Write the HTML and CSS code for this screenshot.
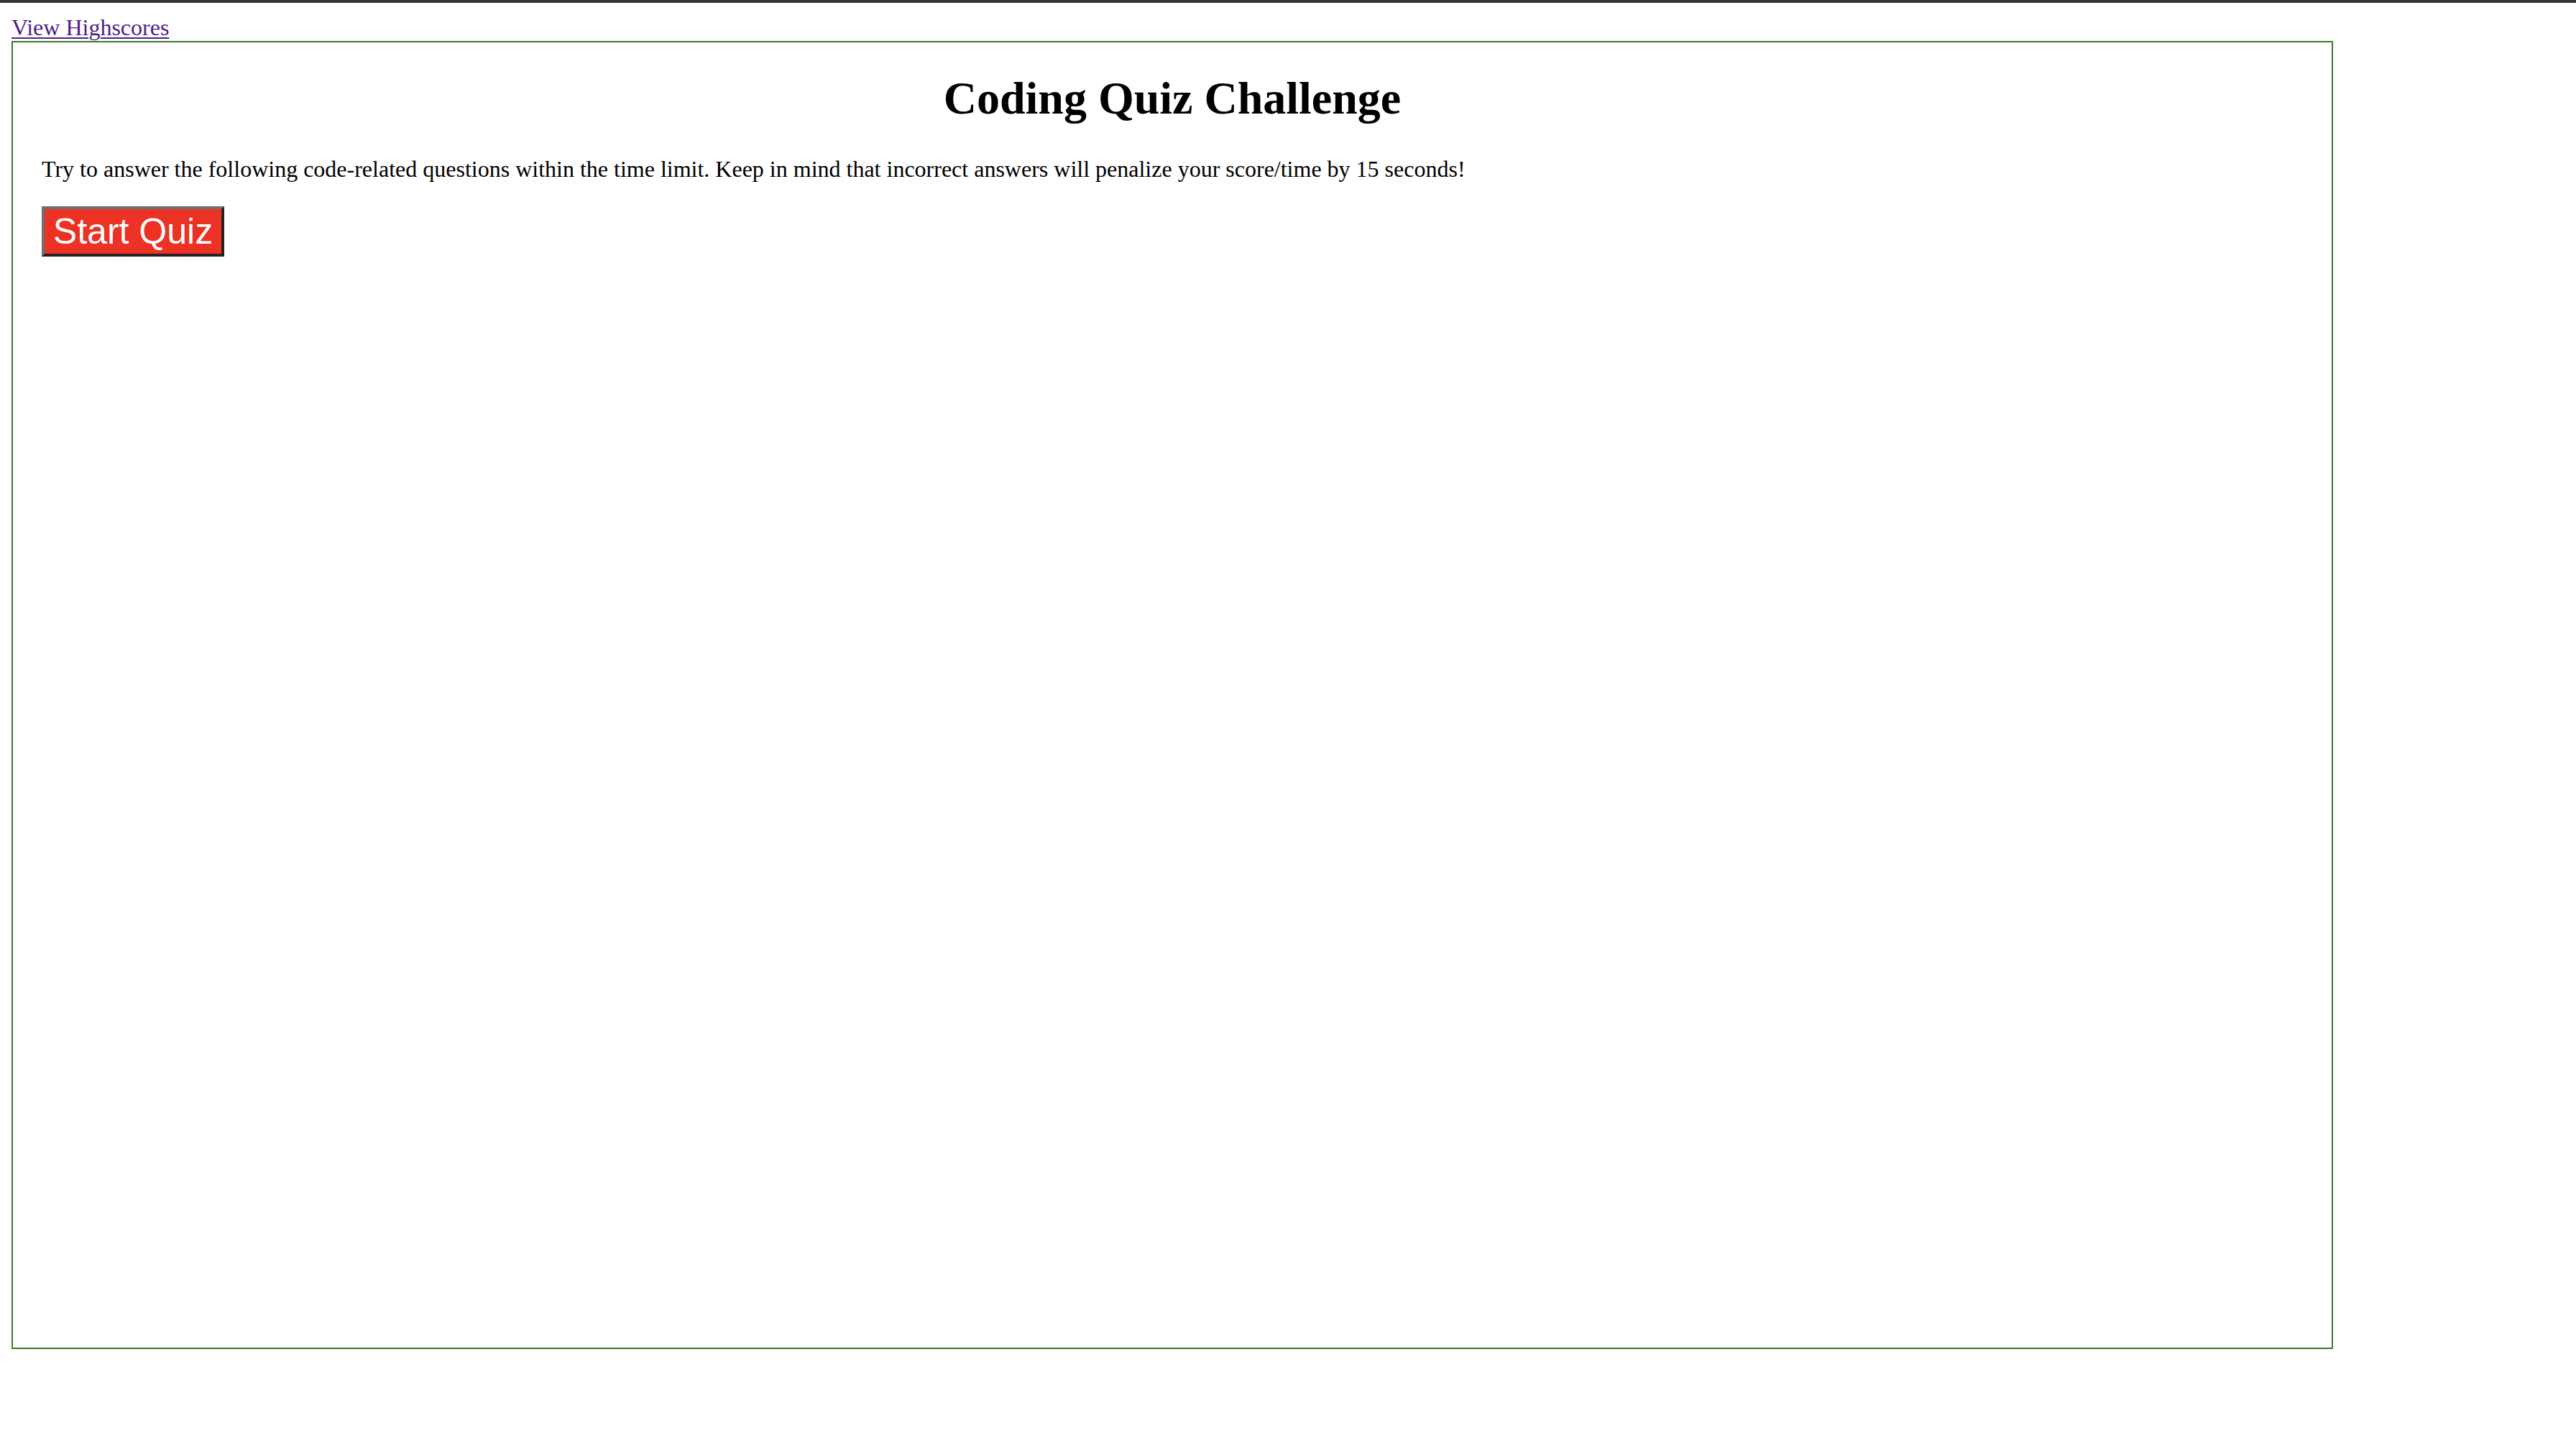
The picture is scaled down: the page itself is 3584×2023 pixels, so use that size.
FILE: index.html
```html
<!DOCTYPE html>
<html lang="en">
<head>
<meta charset="utf-8">
<title>Coding Quiz Challenge</title>
<link rel="stylesheet" href="styles.css">
</head>
<body>
<div class="topbar"></div>
<div class="page">
  <div class="nav"><a class="highscores" href="#">View Highscores</a></div>
  <main class="quiz-box">
    <h1 class="title">Coding Quiz Challenge</h1>
    <p class="intro">Try to answer the following code-related questions within the time limit. Keep in mind that incorrect answers will penalize your score/time by 15 seconds!</p>
    <button class="start-btn" type="button">Start Quiz</button>
  </main>
</div>
</body>
</html>
```
FILE: styles.css
```css
html, body {
  margin: 0;
  padding: 0;
  background: #ffffff;
}

body {
  font-family: "Liberation Serif", "Times New Roman", serif;
  font-size: 32px;
  color: #000000;
}

.topbar {
  height: 4px;
  background: #343434;
}

.page {
  margin: 16px;
}

.nav {
  line-height: 37px;
  height: 37px;
}

.highscores {
  color: #4f1d87;
  text-decoration: underline;
  text-decoration-thickness: 2px;
  text-underline-offset: 3px;
}

.quiz-box {
  display: block;
  box-sizing: border-box;
  width: 3230px;
  height: 1820px;
  border: 2px solid #3a7a22;
  padding: 0 40px;
}

.title {
  font-size: 64px;
  font-weight: bold;
  text-align: center;
  line-height: 73.5px;
  margin: 41px 0 43px 0;
}

.intro {
  font-size: 32px;
  line-height: 36.8px;
  margin: 0 0 34px 0;
}

.start-btn {
  display: block;
  box-sizing: border-box;
  width: 254px;
  height: 70px;
  padding: 0 8px;
  margin: 0;
  font-family: "Liberation Sans", Arial, sans-serif;
  font-size: 50px;
  line-height: 56px;
  color: #ffffff;
  background: #ec3224;
  border-style: solid;
  border-width: 4px;
  border-color: #6e6e6e #222222 #222222 #6e6e6e;
  text-align: center;
  cursor: pointer;
}
```
